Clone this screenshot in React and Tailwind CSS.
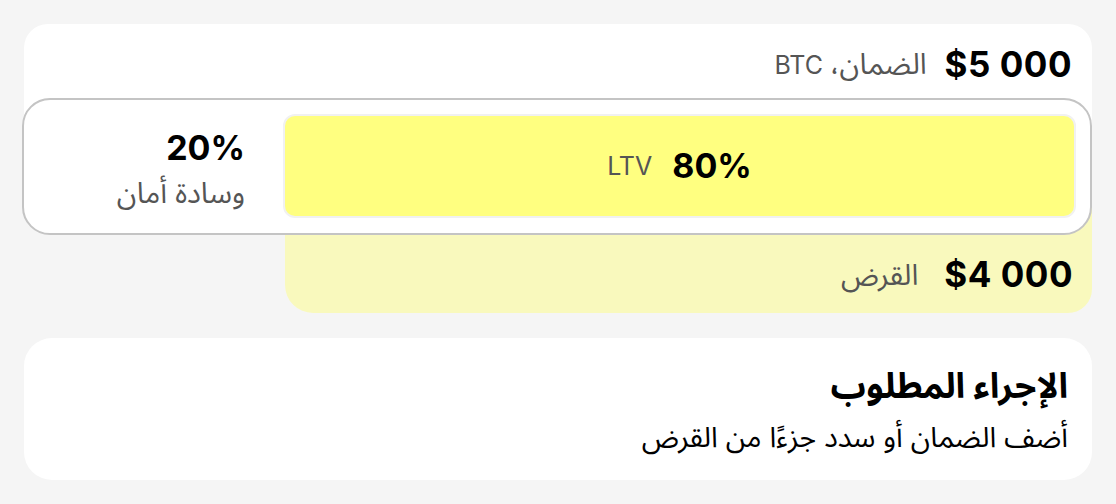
export default function App() {
  return (
    <div
      className="min-h-screen bg-[#f5f5f5] px-6 pt-6 pb-6"
      style={{ fontFamily: 'Inter, "Noto Sans Arabic", "Noto Sans", "DejaVu Sans", sans-serif' }}
    >
      <div dir="rtl">
        {/* collateral header */}
        <div className="bg-white rounded-t-[24px] h-[114px] pr-5 pl-5 pt-5">
          <div className="flex items-center gap-[18px] h-[41px]">
            <span className="text-[35px] font-bold text-black leading-[41px] tracking-[0.5px]" dir="ltr">$5 000</span>
            <span className="text-[25px] text-[#555555] leading-[41px]">
              <span className="text-[29px]">الضمان،</span> BTC
            </span>
          </div>
        </div>

        {/* ltv box */}
        <div className="relative z-10 -mt-[40px] -ml-[2px] bg-white border-2 border-[#c4c4c4] rounded-[28px] pt-[14px] pb-[15px] pr-[14px] flex gap-[38px]">
          <div className="w-[793px] h-[104px] bg-[#ffff80] border-2 border-[#f1f1f1] rounded-[12px] flex items-center justify-center gap-[20px]">
            <span className="text-[34px] font-bold text-black leading-[40px]" dir="ltr">80%</span>
            <span className="text-[25px] text-[#555555] leading-[40px]">LTV</span>
          </div>
          <div className="flex-1 flex flex-col justify-center pt-[6px]">
            <span className="text-[34px] font-bold text-black leading-[40px]" dir="ltr" style={{ textAlign: "right" }}>20%</span>
            <span className="mt-[7px] text-[29px] text-[#555555] leading-[36px]">وسادة أمان</span>
          </div>
        </div>

        {/* loan */}
        <div className="ml-auto w-[807px] -mt-[40px] pt-[40px] bg-[#f9f9bd] rounded-b-[28px] rounded-br-[24px]">
          <div className="h-[78px] flex items-center gap-[26px] pr-[19px]">
            <span className="text-[35px] font-bold text-black leading-[41px] tracking-[0.5px]" dir="ltr">$4 000</span>
            <span className="text-[29px] text-[#555555] leading-[41px]">القرض</span>
          </div>
        </div>

        {/* action card */}
        <div className="mt-[25px] bg-white rounded-[28px] h-[142px] px-6 pt-[25px]">
          <h2 className="text-[35px] font-bold text-black leading-[44px]">الإجراء المطلوب</h2>
          <p className="mt-[10px] text-[28.5px] text-black leading-[40px]">أضف الضمان أو سدد جزءًا من القرض</p>
        </div>
      </div>
    </div>
  );
}
